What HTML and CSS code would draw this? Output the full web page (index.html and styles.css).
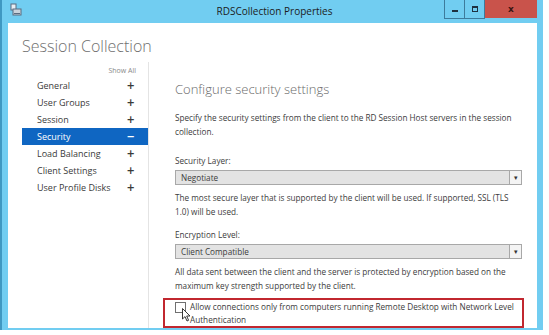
FILE: index.html
```html
<!DOCTYPE html>
<html lang="en">
<head>
    <meta charset="UTF-8">
    <title>RDSCollection Properties</title>
    <link rel="stylesheet" href="styles.css">
</head>
<body>
    <div class="window">
        <div class="titlebar">
            <svg class="app-icon" width="12" height="13" viewBox="0 0 12 13">
                <rect x="1" y="1" width="5" height="6" fill="#e8eef4" stroke="#5a6c80" stroke-width="1"/>
                <rect x="3" y="6" width="8" height="6" fill="#c9d3dc" stroke="#5a6c80" stroke-width="1"/>
                <rect x="4" y="10" width="6" height="1" fill="#5a6c80"/>
            </svg>
            <div class="title">RDSCollection Properties</div>
            <div class="controls">
                <span class="ctl ctl-min"><span class="min-bar"></span></span>
                <span class="ctl ctl-max"><span class="max-box"></span></span>
                <span class="ctl ctl-close">x</span>
            </div>
        </div>

        <div class="client">
            <h1 class="heading">Session Collection</h1>
            <div class="body">
                <nav class="nav">
                    <div class="show-all">Show All</div>
                    <ul class="nav-list">
                        <li class="nav-item"><span>General</span><span class="sign">+</span></li>
                        <li class="nav-item"><span>User Groups</span><span class="sign">+</span></li>
                        <li class="nav-item"><span>Session</span><span class="sign">+</span></li>
                        <li class="nav-item selected"><span>Security</span><span class="sign">&minus;</span></li>
                        <li class="nav-item"><span>Load Balancing</span><span class="sign">+</span></li>
                        <li class="nav-item"><span>Client Settings</span><span class="sign">+</span></li>
                        <li class="nav-item"><span>User Profile Disks</span><span class="sign">+</span></li>
                    </ul>
                </nav>

                <main class="page">
                    <h2 class="page-title">Configure security settings</h2>
                    <p class="text intro">Specify the security settings from the client to the RD Session Host servers in the session collection.</p>

                    <div class="field-label first">Security Layer:</div>
                    <div class="select">
                        <span class="select-value">Negotiate</span>
                        <span class="select-arrow">&#9662;</span>
                    </div>
                    <p class="text">The most secure layer that is supported by the client will be used. If supported, SSL (TLS 1.0) will be used.</p>

                    <div class="field-label">Encryption Level:</div>
                    <div class="select">
                        <span class="select-value">Client Compatible</span>
                        <span class="select-arrow">&#9662;</span>
                    </div>
                    <p class="text">All data sent between the client and the server is protected by encryption based on the maximum key strength supported by the client.</p>

                    <div class="nla">
                        <span class="checkbox"></span>
                        <span class="nla-text">Allow connections only from computers running Remote Desktop with Network Level Authentication</span>
                        <svg class="cursor" width="9" height="14" viewBox="0 0 9 14">
                            <path d="M0.5 0.5 L0.5 11 L3 8.6 L5 13 L6.6 12.3 L4.7 8 L8 8 Z" fill="#fff" stroke="#222" stroke-width="0.9"/>
                        </svg>
                    </div>
                </main>
            </div>
        </div>
    </div>
</body>
</html>
```

FILE: styles.css
```css
body {
    margin: 0;
    background-color: #ffffff;
    font-family: 'Open Sans', 'Noto Sans', sans-serif;
    color: #3c3c3c;
}

.window {
    width: 535px;
    height: 327px;
    background-color: #71cdf1;
    border-left: 2px solid #3f98c2;
    padding: 0 6px 3px 0;
    display: flex;
    flex-direction: column;
}

/* Title bar */
.titlebar {
    height: 23px;
    flex-shrink: 0;
    display: grid;
    grid-template-columns: 1fr auto 1fr;
    align-items: start;
}

.app-icon {
    margin: 3px 0 0 8px;
}

.title {
    font-size: 10px;
    color: #1c1c1c;
    line-height: 22px;
    padding-left: 10px;
}

.controls {
    justify-self: end;
    display: flex;
    height: 19px;
}

.ctl {
    width: 19px;
    height: 18px;
    border: 1px solid #3d7b9c;
    border-top: none;
    display: flex;
    align-items: center;
    justify-content: center;
}

.ctl-max {
    border-left: none;
}

.min-bar {
    width: 6px;
    height: 2px;
    margin-top: 4px;
    background-color: #1e3140;
}

.max-box {
    width: 4px;
    height: 3px;
    border: 1px solid #1e3140;
    border-top-width: 2px;
}

.ctl-close {
    width: 52px;
    border: none;
    background-color: #c9534b;
    color: #3a1512;
    font-family: 'DejaVu Sans', sans-serif;
    font-weight: bold;
    font-size: 9px;
}

/* Client area */
.client {
    flex-grow: 1;
    background-color: #ffffff;
    margin-left: 6px;
    display: flex;
    flex-direction: column;
}

.heading {
    font-weight: 300;
    font-size: 16px;
    color: #6f6f6f;
    margin: 12px 0 0 14px;
    line-height: 22px;
}

.body {
    flex-grow: 1;
    display: flex;
    margin-top: 5px;
}

.nav {
    flex-shrink: 0;
    width: 126px;
    margin-left: 14px;
    border-right: 1px solid #e4e4e4;
}

.show-all {
    font-size: 7px;
    color: #8a8a8a;
    text-align: right;
    padding-right: 12px;
    line-height: 12px;
    margin-top: 3px;
}

.nav-list {
    list-style: none;
    margin: 0;
    padding: 0;
}

.nav-item {
    height: 17px;
    display: flex;
    align-items: center;
    justify-content: space-between;
    padding: 0 13px 0 15px;
    font-size: 9px;
    white-space: nowrap;
    color: #3a3a3a;
}

.nav-item .sign {
    font-family: 'DejaVu Sans', sans-serif;
    font-weight: bold;
    font-size: 10px;
}

.nav-item.selected {
    background-color: #0f66c2;
    color: #ffffff;
}

/* Page */
.page {
    flex-grow: 1;
    padding: 0 15px 0 26px;
}

.page-title {
    font-weight: 300;
    font-size: 13px;
    color: #6a6a6a;
    margin: 17px 0 0;
    line-height: 20px;
}

.text {
    font-size: 8.2px;
    line-height: 14px;
    margin: 0;
    color: #3c3c3c;
}

.intro {
    margin-top: 12px;
}

.field-label {
    font-size: 8.2px;
    line-height: 14px;
    margin-top: 9px;
}

.field-label.first {
    margin-top: 15px;
}

.select {
    height: 13px;
    margin: 2px 0 6px;
    border: 1px solid #a8a8a8;
    background-color: #e3e3e3;
    display: flex;
    align-items: center;
    justify-content: space-between;
    font-size: 8.2px;
}

.select-value {
    padding-left: 5px;
}

.select-arrow {
    width: 11px;
    height: 13px;
    line-height: 13px;
    text-align: center;
    background-color: #f4f4f4;
    border-left: 1px solid #a8a8a8;
    font-size: 7px;
    color: #333;
}

.nla {
    position: relative;
    margin: 5px -2px 0 -12px;
    border: 2px solid #c1272f;
    padding: 0 6px 0 10px;
    display: flex;
    align-items: flex-start;
    gap: 4px;
}

.checkbox {
    flex-shrink: 0;
    width: 9px;
    height: 9px;
    margin-top: 2px;
    border: 1px solid #707070;
    background-color: #ffffff;
}

.nla-text {
    font-size: 8.2px;
    line-height: 13px;
}

.cursor {
    position: absolute;
    left: 17px;
    top: 8px;
}
```
